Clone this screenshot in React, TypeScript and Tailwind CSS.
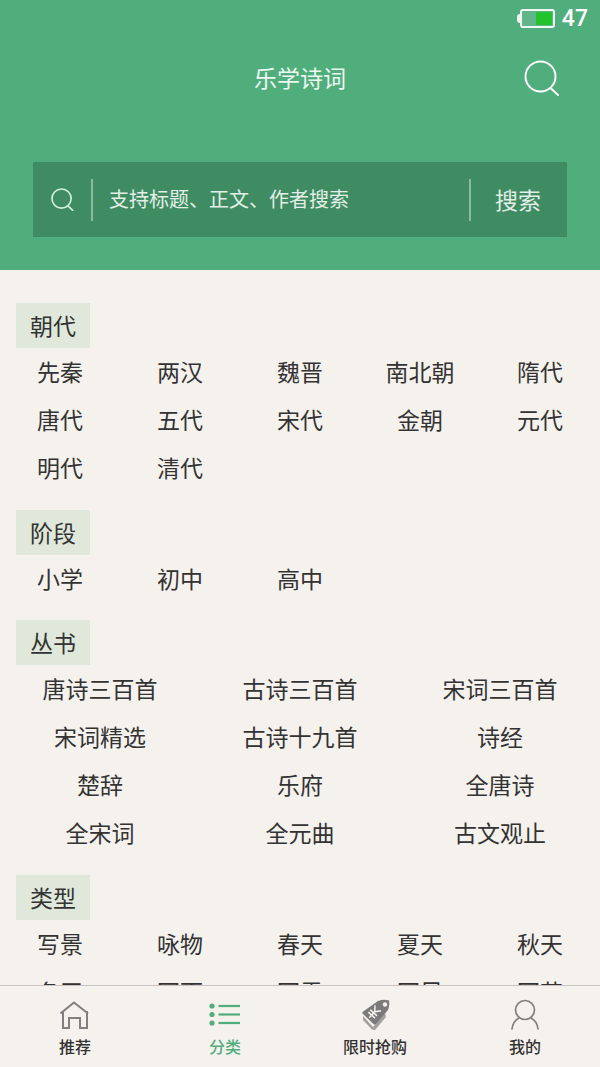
import React from 'react';

const sections = [
  { title: '朝代', cols: 5, items: ['先秦', '两汉', '魏晋', '南北朝', '隋代', '唐代', '五代', '宋代', '金朝', '元代', '明代', '清代'] },
  { title: '阶段', cols: 5, items: ['小学', '初中', '高中'] },
  { title: '丛书', cols: 3, items: ['唐诗三百首', '古诗三百首', '宋词三百首', '宋词精选', '古诗十九首', '诗经', '楚辞', '乐府', '全唐诗', '全宋词', '全元曲', '古文观止'] },
  { title: '类型', cols: 5, items: ['写景', '咏物', '春天', '夏天', '秋天', '冬天', '写雨', '写雪', '写风', '写花'] },
];

const SearchIcon: React.FC<{ className?: string; sw?: number }> = ({ className, sw = 1.6 }) => (
  <svg viewBox="0 0 36 36" fill="none" stroke="currentColor" strokeWidth={sw} strokeLinecap="round" className={className}>
    <circle cx="16.5" cy="16.5" r="15" />
    <line x1="26.5" y1="28" x2="34" y2="35" />
  </svg>
);

const HomeIcon = () => (
  <svg viewBox="0 0 30 28" fill="none" stroke="#808080" strokeWidth="2" className="w-[30px] h-[28px]">
    <path d="M0.5 12.5 L14 1.5 L28 12.5" />
    <path d="M3 10 V27 H9 V17 H20 V27 H27 V10" />
  </svg>
);

const ListIcon = () => (
  <svg viewBox="0 0 32 28" fill="none" stroke="#52ad7e" strokeWidth="2.2" className="w-[32px] h-[28px]">
    <circle cx="3" cy="5" r="2.6" fill="#52ad7e" stroke="none" />
    <circle cx="3" cy="13.5" r="2.6" fill="#52ad7e" stroke="none" />
    <circle cx="3" cy="22" r="2.6" fill="#52ad7e" stroke="none" />
    <line x1="9.5" y1="5" x2="31" y2="5" />
    <line x1="9.5" y1="13.5" x2="31" y2="13.5" />
    <line x1="9.5" y1="22" x2="31" y2="22" />
  </svg>
);

const TagIcon = () => (
  <svg viewBox="0 0 30 32" className="w-[30px] h-[32px]">
    <path d="M3 17 L13 28 L25 14 L26 18 L15 31 Q13 31.5 11 29.5 L3 21 Z" fill="#a3a09d" />
    <path d="M2.5 13 Q2 14 3 15 L13.5 25 Q15 26 16 25 L28 11 Q30 6 29 1.5 Q24 0 18 2 Z" fill="#7b7b7b" />
    <circle cx="25" cy="5.5" r="2.2" fill="#f5f1ed" />
    <g transform="translate(14 13.5) rotate(42)" stroke="#f5f1ed" strokeWidth="1.5" fill="none">
      <path d="M-4 -6 L0 -1 L4 -6 M0 -1 V7 M-4.5 0.5 H4.5 M-4.5 3.5 H4.5" />
    </g>
  </svg>
);

const UserIcon = () => (
  <svg viewBox="0 0 30 32" fill="none" stroke="#808080" strokeWidth="1.7" strokeLinecap="round" className="w-[30px] h-[32px]">
    <circle cx="15" cy="11" r="9.5" />
    <path d="M2 30 Q3 22 9 19 M28 30 Q27 22 21 19" />
  </svg>
);

const tabs = [
  { label: '推荐', icon: <HomeIcon />, active: false },
  { label: '分类', icon: <ListIcon />, active: true },
  { label: '限时抢购', icon: <TagIcon />, active: false },
  { label: '我的', icon: <UserIcon />, active: false },
];

export default function App() {
  return (
    <div className="w-[600px] h-[1067px] flex flex-col overflow-hidden bg-[#f5f1ed] font-['Noto_Sans_CJK_SC','Noto_Sans',sans-serif]">
      <header className="h-[270px] shrink-0 flex flex-col bg-[#4fae7c] px-[33px]">
        <div className="h-[36px] flex items-center justify-end -mr-[21px] text-white">
          <div className="flex items-center">
            <div className="w-[3px] h-[9px] bg-white/90 rounded-l-sm" />
            <div className="w-[35px] h-[19px] border-2 border-white/90 rounded-[3px] flex justify-end p-[1px] bg-white/10">
              <div className="w-[16px] bg-[#22c32c]" />
            </div>
          </div>
          <span className="ml-[7px] text-[23px] font-medium leading-none font-['Roboto',sans-serif]">47</span>
        </div>
        <div className="h-[62px] mt-[10px] grid grid-cols-[1fr_auto_1fr] items-center">
          <div />
          <h1 className="text-[23px] font-normal text-white/90 leading-none">乐学诗词</h1>
          <div className="flex justify-end mr-[7px] pt-[2px]">
            <SearchIcon className="w-[36px] h-[36px] text-white" sw={2} />
          </div>
        </div>
        <div className="mt-[54px] h-[75px] flex items-center bg-[#3f8c62] text-white/85">
          <div className="w-[58px] flex justify-center">
            <SearchIcon className="w-[23px] h-[23px] text-[#d5eedd]" sw={2.6} />
          </div>
          <div className="w-[2px] h-[42px] bg-white/40" />
          <span className="ml-[16px] flex-1 text-[20px] leading-none pb-[1px]">支持标题、正文、作者搜索</span>
          <div className="w-[2px] h-[42px] bg-white/40" />
          <span className="w-[96px] pr-[2px] pb-[1px] text-center text-[23px] leading-none">搜索</span>
        </div>
      </header>

      <main className="flex-1 min-h-0 overflow-hidden pt-[33px] flex flex-col gap-[16.5px]">
        {sections.map(s => (
          <section key={s.title}>
            <div className="ml-[16px] w-[74px] h-[45px] flex items-center justify-center bg-[#dfe8da] text-[23px] text-[#333] leading-none">
              {s.title}
            </div>
            <div className={s.cols === 5 ? 'grid grid-cols-5 mt-[1px]' : 'grid grid-cols-3 mt-[1px]'}>
              {s.items.map(item => (
                <div key={item} className="h-[48px] pb-[3px] flex items-center justify-center text-[23px] text-[#333] leading-none">
                  {item}
                </div>
              ))}
            </div>
          </section>
        ))}
      </main>

      <nav className="h-[82px] shrink-0 grid grid-cols-4 bg-[#f5f1ed] border-t border-[#c9c4c0]">
        {tabs.map(t => (
          <div key={t.label} className="flex flex-col items-center pt-[13px]">
            <div className="h-[32px] flex items-center justify-center">{t.icon}</div>
            <span className={t.active ? 'mt-[3px] text-[16px] font-medium leading-[24px] text-[#52ad7e]' : 'mt-[3px] text-[16px] font-medium leading-[24px] text-[#333]'}>
              {t.label}
            </span>
          </div>
        ))}
      </nav>
    </div>
  );
}
